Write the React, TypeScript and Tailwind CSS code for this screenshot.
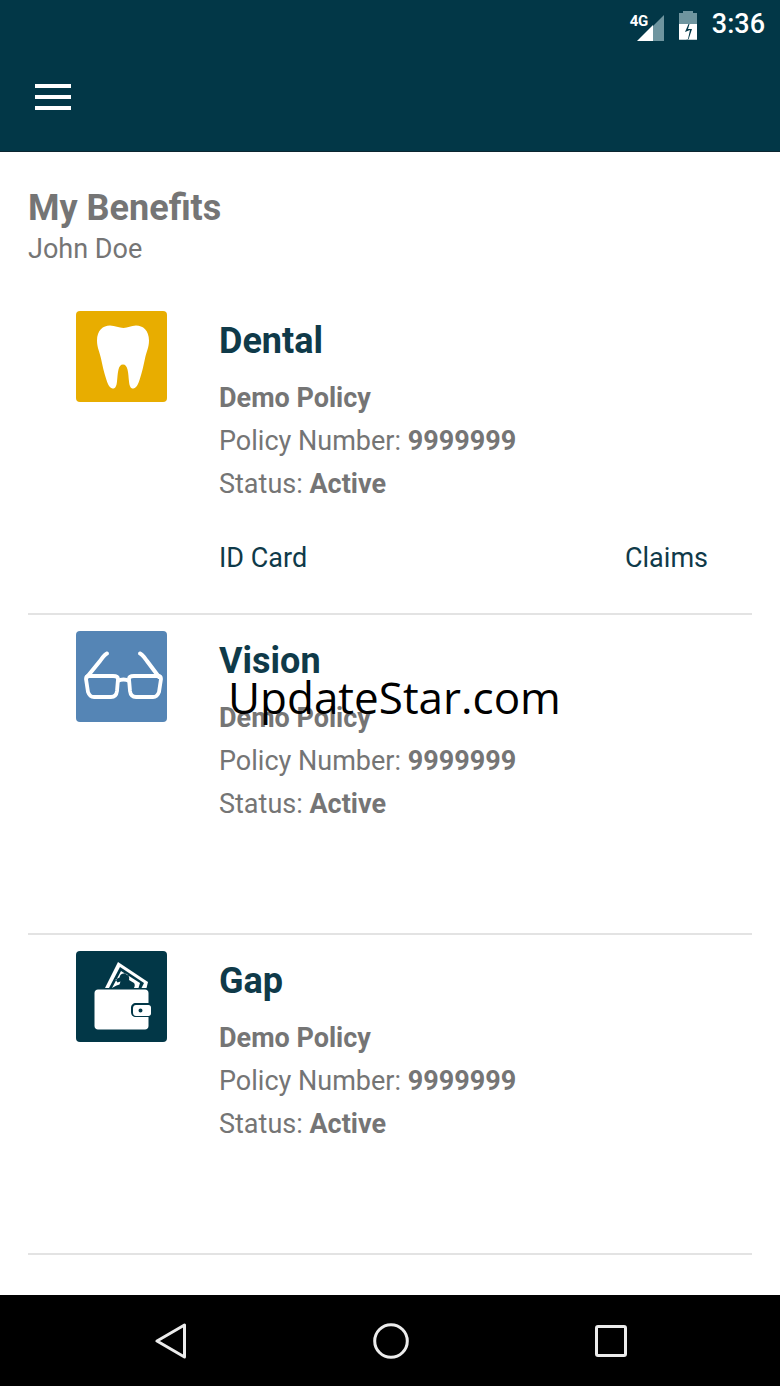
import React from "react";

const Tooth = () => (
  <svg viewBox="0 0 91 91" className="w-full h-full">
    <path fill="#fff" d="M34 14.5c-7 0-13 5-13 15 0 7 2.500 11 4 18 1.500 7 3 14 5 20 1.500 4.500 3 9.500 6.500 10 3 .3 4-2.500 4.500-7 .5-4 .5-8 1.500-12 .7-3 2-5 4.500-5s3.800 2 4.500 5c1 4 1 8 1.500 12 .5 4.500 1.500 7.300 4.500 7 3.500-.5 5-5.500 6.500-10 2-6 3.500-13 5-20 1.500-7 4-11 4-18 0-10-6-15-13-15-5 0-8 2.500-12.500 2.500S39 14.500 34 14.500z" />
  </svg>
);

const Glasses = () => (
  <svg viewBox="0 0 91 91" className="w-full h-full" fill="none" stroke="#fff">
    <path strokeWidth="4" strokeLinecap="round" d="M31 22.500C29 23 27 26 24 30L11 46M64 22.500c2 .5 4 3.500 7 7.500l12 16" />
    <path strokeWidth="3.800" strokeLinejoin="round" d="M10 48c0-2 1-3 3-3h24c3 0 5 1 5 3l-1 12c-.5 4-2 6-6 6H18c-3 0-5-2-6-5zM85 48c0-2-1-3-3-3H58c-3 0-5 1-5 3l1 12c.5 4 2 6 6 6h17c3 0 5-2 6-5z" />
    <path strokeWidth="3.800" d="M42 50c3-2 8-2 11 0" />
  </svg>
);

const Wallet = () => (
  <svg viewBox="0 0 91 91" className="w-full h-full">
    <path fill="#fff" d="M29 37 42 11l30 20-1.500 6h-5L68 32 44 16 33 37z" />
    <path fill="#fff" d="M36 37l9-17 19 12-1.500 5H58c1-2 1-4 0-5l-5-3c1-3-1-6-4-6.500-3-.5-5 1-5.500 4l-4 2 2 3 3-1-1 3-3 1z" />
    <path fill="#fff" fillRule="evenodd" d="M22 38.500h47c2 0 3.500 1.500 3.500 3.500v10H60c-3 0-5 2-5 5v4c0 3 2 5 5 5h12.500v9c0 2-1.500 3.500-3.500 3.500H22c-2 0-3.500-1.500-3.500-3.500V42c0-2 1.500-3.500 3.500-3.500z" />
    <path fill="#fff" fillRule="evenodd" d="M60 54h12.500c1.500 0 2.500 1 2.500 2.500v6c0 1.500-1 2.500-2.500 2.500H60c-2 0-3-1.500-3-3.500v-4C57 55.500 58 54 60 54zm4.500 3.500a2 2 0 1 0 0 4 2 2 0 0 0 0-4z" />
  </svg>
);

function Card({
  title,
  bg,
  icon,
  actions,
}: {
  title: string;
  bg: string;
  icon: React.ReactNode;
  actions?: boolean;
}) {
  return (
    <div className="h-[320px] border-b-2 border-[#e3e3e3] flex">
      <div className="pl-[48px] pt-[16px] w-[191px] shrink-0">
        <div className={`w-[91px] h-[91px] rounded-[4px] ${bg}`}>{icon}</div>
      </div>
      <div className="flex-1 flex flex-col pr-[44px]">
        <div className="mt-[23px] h-[46px] leading-[46px] text-[36px] font-bold text-[#0f3a49]">{title}</div>
        <div className="mt-[13px] h-[43px] leading-[43px] text-[27px] font-bold text-[#757575]">Demo Policy</div>
        <div className="h-[43px] leading-[43px] text-[27px] text-[#757575]">
          Policy Number: <span className="font-bold">9999999</span>
        </div>
        <div className="h-[43px] leading-[43px] text-[27px] text-[#757575]">
          Status: <span className="font-bold">Active</span>
        </div>
        {actions && (
          <div className="mt-[31px] h-[43px] leading-[43px] flex justify-between text-[27px] text-[#0f3a49]">
            <span>ID Card</span>
            <span>Claims</span>
          </div>
        )}
      </div>
    </div>
  );
}

export default function App() {
  return (
    <div className="relative w-[780px] h-[1386px] bg-white flex flex-col overflow-hidden font-['Roboto',sans-serif]">
      <header className="h-[152px] shrink-0 bg-[#023747] border-b border-[#0c2630] flex flex-col">
        <div className="h-[48px] flex items-center justify-end pr-[15px] gap-[14px]">
          <div className="relative w-[34px] h-[36px]">
            <span className="absolute left-0 top-[7px] text-[15px] leading-[16px] font-bold text-white tracking-[-0.5px]">4G</span>
            <svg viewBox="0 0 34 36" className="absolute inset-0 w-full h-full">
              <path fill="#6f959f" d="M34 9v26H8z" />
              <path fill="#fff" d="M8 35l16-16v16z" transform="translate(-1 0)" />
            </svg>
          </div>
          <svg viewBox="0 0 20 30" className="w-[20px] h-[30px] mt-[3px]">
            <path fill="#6f959f" d="M5 2V0h10v2h4v11H1V2z" />
            <path fill="#fff" d="M1 13h9.500L7 21l5-2-2 9h9V13 28.500H1z" />
            <path fill="#fff" d="M1 13h8l-3 9h4l-1.500 6.500H1zM11.500 13H19v15.500h-8.500L14 18h-4z" />
          </svg>
          <span className="text-[27px] leading-[30px] font-medium text-white">3:36</span>
        </div>
        <div className="pl-[35px] pt-[36px] flex flex-col gap-[7px]">
          <div className="w-[36px] h-[4px] bg-white" />
          <div className="w-[36px] h-[4px] bg-white" />
          <div className="w-[36px] h-[4px] bg-white" />
        </div>
      </header>

      <main className="flex-1 px-[28px]">
        <h1 className="mt-[33px] h-[46px] leading-[46px] text-[36px] font-bold text-[#757575]">My Benefits</h1>
        <p className="h-[36px] leading-[36px] text-[27px] text-[#757575]">John Doe</p>
        <div className="mt-[28px]">
          <Card title="Dental" bg="bg-[#e8ad00]" icon={<Tooth />} actions />
          <Card title="Vision" bg="bg-[#5585b5]" icon={<Glasses />} />
          <Card title="Gap" bg="bg-[#023747]" icon={<Wallet />} />
        </div>
      </main>

      <nav className="h-[91px] shrink-0 bg-black flex items-center">
        <div className="w-[780px] flex items-center justify-between pl-[155px] pr-[153px]">
          <svg viewBox="0 0 32 36" className="w-[32px] h-[36px]" fill="none" stroke="#ececec" strokeWidth="3" strokeLinejoin="round">
            <path d="M29.500 2v32L2 18z" />
          </svg>
          <svg viewBox="0 0 36 36" className="w-[36px] h-[36px]" fill="none" stroke="#ececec" strokeWidth="3">
            <circle cx="18" cy="18" r="16.300" />
          </svg>
          <svg viewBox="0 0 32 32" className="w-[32px] h-[32px]" fill="none" stroke="#ececec" strokeWidth="3" strokeLinejoin="round">
            <rect x="1.500" y="1.500" width="29" height="29" rx="1.500" />
          </svg>
        </div>
      </nav>

      <div className="absolute left-[228px] top-[668px] text-[44px] leading-[58px] text-black font-['Open_Sans',sans-serif] whitespace-nowrap">
        UpdateStar.com
      </div>
    </div>
  );
}
